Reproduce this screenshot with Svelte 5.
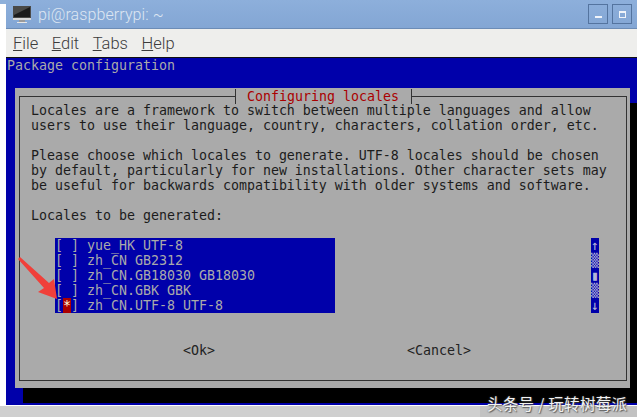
<script>
  const intro = `Locales are a framework to switch between multiple languages and allow
users to use their language, country, characters, collation order, etc.

Please choose which locales to generate. UTF-8 locales should be chosen
by default, particularly for new installations. Other character sets may
be useful for backwards compatibility with older systems and software.

Locales to be generated:`;
  const locales = ['yue_HK UTF-8', 'zh_CN GB2312', 'zh_CN.GB18030 GB18030', 'zh_CN.GBK GBK', 'zh_CN.UTF-8 UTF-8'];
  const scroll = ['↑', '▒', '▮', '▒', '↓'];
  const menu = [['F', 'ile'], ['E', 'dit'], ['T', 'abs'], ['H', 'elp']];
</script>

<div class="page">
  <div class="window">
    <header class="titlebar">
      <svg class="appicon" width="20" height="18" viewBox="0 0 20 18" aria-hidden="true">
        <rect x="1" y="0" width="18" height="12" fill="#4a4a48" />
        <rect x="2" y="1" width="16" height="10" fill="#1b1b1b" />
        <path d="M2 1h16L2 9z" fill="#4a4a48" />
        <rect x="1" y="12" width="18" height="2" fill="#d8d8d8" />
        <rect x="7" y="14" width="6" height="2" fill="#9a9a9a" />
        <rect x="5" y="16" width="10" height="1" fill="#e6e6e6" />
      </svg>
      <span class="wintitle">pi@raspberrypi: ~</span>
      <div class="winbtns">
        <span class="winbtn"><i class="min"></i></span>
        <span class="winbtn"><i class="max"></i></span>
      </div>
    </header>
    <nav class="menubar">
      {#each menu as [k, rest]}
        <span><u>{k}</u>{rest}</span>
      {/each}
    </nav>
    <main class="term">
      <div class="pkg">Package configuration</div>
      <section class="dialog">
        <div class="frame">
          <div class="dtitle">Configuring locales</div>
          <pre class="intro">{intro}</pre>
          <div class="listrow">
            <ul class="list">
              {#each locales as l, i}
                <li>[<span class:mark={i === 4}>{i === 4 ? '*' : ' '}</span>] {l}</li>
              {/each}
            </ul>
            <div class="scroll">
              {#each scroll as s}
                <span>{s}</span>
              {/each}
            </div>
          </div>
          <div class="btns">
            <span class="ok">&lt;Ok&gt;</span>
            <span class="cancel">&lt;Cancel&gt;</span>
          </div>
        </div>
      </section>
      <svg class="arrow" width="44" height="46" viewBox="0 0 44 46" aria-hidden="true">
        <path d="M2 0 L31 26 L36 22 L39 42 L20 35 L26 31 L0 2 Z" fill="#f0403a" />
      </svg>
    </main>
  </div>
  <div class="foot"></div>
  <div class="mark-text">头条号 / 玩转树莓派</div>
</div>

<style>
  :global(body) {
    margin: 0;
    background: #fff;
  }
  .page {
    position: relative;
    width: 637px;
    height: 417px;
    overflow: hidden;
    background: linear-gradient(#8eb0da 0 4px, #fff 4px);
  }
  .window {
    margin-left: 6px;
    height: 405px;
    display: flex;
    flex-direction: column;
  }
  .titlebar {
    height: 28px;
    flex: none;
    background: linear-gradient(#8dafdb, #83a6d4);
    border-bottom: 1px solid #6c8cb6;
    display: flex;
    align-items: center;
    padding-left: 6px;
    font-family: Roboto, sans-serif;
  }
  .appicon {
    flex: none;
    margin-top: 2px;
  }
  .wintitle {
    margin-left: 6px;
    color: #dde6f2;
    font-size: 16px;
    font-weight: 300;
    letter-spacing: 0.1px;
  }
  .winbtns {
    margin-left: auto;
    margin-right: 5px;
    display: flex;
    gap: 4px;
  }
  .winbtn {
    box-sizing: border-box;
    width: 20px;
    height: 20px;
    border: 1px solid #54749f;
    display: flex;
    align-items: center;
    justify-content: center;
  }
  .winbtn .min {
    width: 7px;
    height: 2px;
    background: #f0f4fa;
    margin-top: 5px;
  }
  .winbtn .max {
    box-sizing: border-box;
    width: 7px;
    height: 7px;
    border: 1px solid #f0f4fa;
    border-top-width: 2px;
  }
  .menubar {
    height: 28px;
    flex: none;
    background: #eeeeec;
    border-bottom: 1px solid #111;
    display: flex;
    align-items: center;
    gap: 13.5px;
    padding-left: 7px;
    font-family: Roboto, sans-serif;
    font-size: 16.5px;
    font-weight: 300;
    color: #3c3c3c;
  }
  .term {
    position: relative;
    flex: 1;
    min-height: 0;
    background: #0000aa;
    border-bottom: 2px solid #0000aa;
    font-family: "DejaVu Sans Mono", monospace;
    font-size: 13.29px;
    line-height: 15px;
    color: #aaa;
    padding-left: 1px;
  }
  .pkg {
    height: 15px;
  }
  .dialog {
    box-sizing: border-box;
    margin: 15px 0 0 8px;
    width: 615px;
    height: 300px;
    background: #aaa;
    box-shadow: 8px 15px 0 #000;
    padding: 8px 3px 7px 4px;
    color: #1c1c1c;
  }
  .frame {
    position: relative;
    box-sizing: border-box;
    height: 100%;
    border: 1px solid #333;
    padding-left: 11px;
    padding-top: 6px;
  }
  .dtitle {
    position: absolute;
    top: -8px;
    left: 215px;
    height: 15px;
    padding: 0 12px 0 11px;
    background: #aaa;
    border-left: 1px solid #333;
    border-right: 1px solid #333;
    color: #aa0000;
  }
  .intro {
    margin: 0;
    height: 120px;
    font: inherit;
    white-space: pre;
  }
  .listrow {
    margin-top: 15px;
    display: flex;
  }
  .list {
    margin: 0 0 0 24px;
    padding: 0;
    list-style: none;
    width: 280px;
    background: #0000aa;
    color: #aaa;
  }
  .list li {
    height: 15px;
    white-space: pre;
  }
  .mark {
    display: inline-block;
    width: 8px;
    height: 15px;
    background: #aa0000;
    color: #ffd;
  }
  .scroll {
    margin-left: 256px;
    width: 8px;
    background: #0000aa;
    color: #b4b4d8;
    display: flex;
    flex-direction: column;
    overflow: hidden;
  }
  .scroll span {
    display: block;
    height: 15px;
  }
  .btns {
    margin-top: 30px;
    display: flex;
    color: #222;
  }
  .ok {
    margin-left: 152px;
  }
  .cancel {
    margin-left: 192px;
  }
  .arrow {
    position: absolute;
    left: 12px;
    top: 199px;
  }
  .foot {
    height: 1px;
    background: #fff;
  }
  .page::after {
    content: "";
    position: absolute;
    left: 0;
    right: 0;
    top: 406px;
    bottom: 0;
    background: linear-gradient(90deg, #cfcfcf 0 480px, #c2c2c2 480px);
  }
  .mark-text {
    position: absolute;
    left: 487px;
    top: 394px;
    z-index: 2;
    font-family: "Noto Sans CJK SC", sans-serif;
    font-size: 15.5px;
    font-weight: 400;
    line-height: 18px;
    letter-spacing: 0.3px;
    white-space: nowrap;
    color: #f2f2f2;
    text-shadow: 0 0 2px #555, 1px 1px 1px rgba(60, 60, 60, 0.7);
  }
</style>
